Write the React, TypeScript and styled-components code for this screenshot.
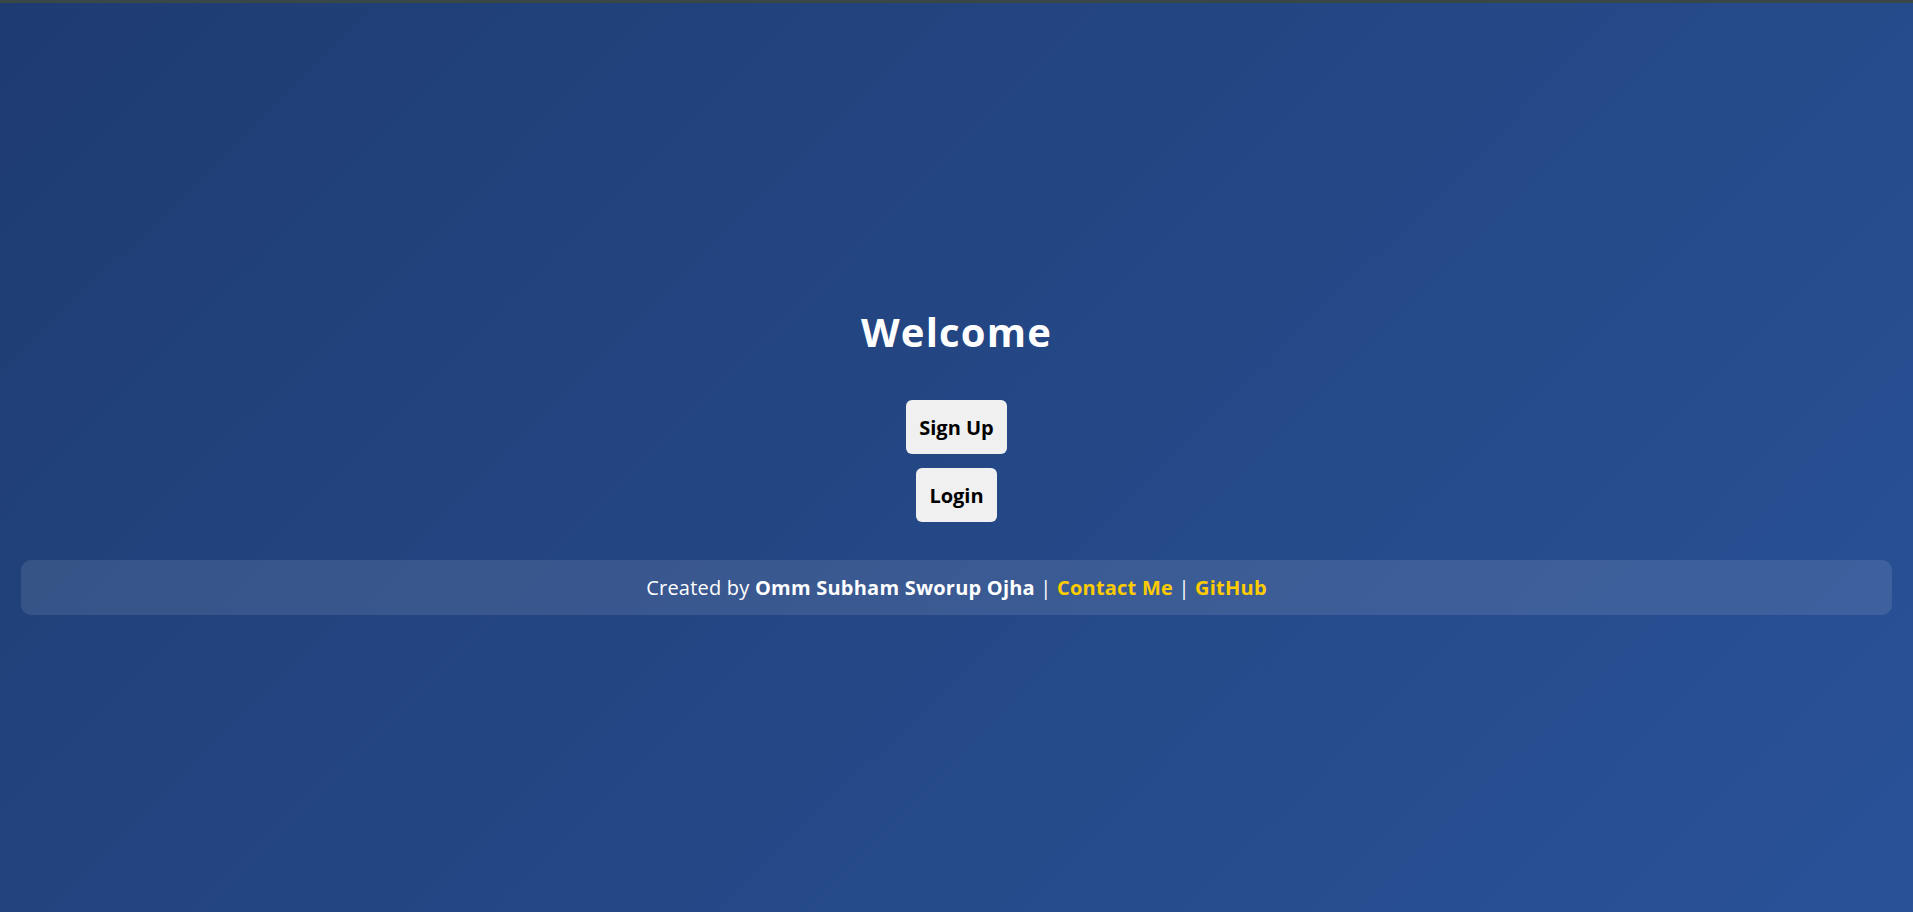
import React from 'react';
import styled, { createGlobalStyle } from 'styled-components';

const GlobalStyle = createGlobalStyle`
  html, body {
    margin: 0;
    padding: 0;
    height: 100%;
  }
  body {
    font-family: "Open Sans", "Liberation Sans", sans-serif;
    background: linear-gradient(135deg, #1e3c72 0%, #2a5298 100%);
    min-height: 100vh;
    color: #fff;
  }
`;

const Page = styled.div`
  box-sizing: border-box;
  min-height: 100vh;
  border-top: 3px solid #3a4747;
  padding: 8px 21px 0;
  display: flex;
  flex-direction: column;
  align-items: center;
  justify-content: center;
`;

const Title = styled.h1`
  margin: 0 0 44px;
  font-size: 40px;
  line-height: 48px;
  font-weight: 700;
  letter-spacing: 1.2px;
  color: #fff;
`;

const ButtonStack = styled.div`
  display: flex;
  flex-direction: column;
  align-items: center;
  gap: 14px;
  margin-bottom: 38px;
`;

const Button = styled.button`
  font-family: inherit;
  font-size: 20px;
  line-height: 30px;
  font-weight: 700;
  color: #000;
  background: #f0f0f0;
  border: none;
  border-radius: 6px;
  padding: 13px 13px 11px;
  cursor: pointer;
`;

const Footer = styled.footer`
  align-self: stretch;
  box-sizing: border-box;
  background: rgba(255, 255, 255, 0.1);
  border-radius: 10px;
  padding: 12.5px 20px;
  text-align: center;
  font-size: 20px;
  line-height: 30px;
  letter-spacing: 0.22px;
  color: #fff;
`;

const Name = styled.strong`
  font-weight: 700;
`;

const Link = styled.a`
  color: #ffcc00;
  font-weight: 700;
  text-decoration: none;
`;

export default function App() {
  return (
    <>
      <GlobalStyle />
      <Page>
        <Title>Welcome</Title>
        <ButtonStack>
          <Button>Sign Up</Button>
          <Button>Login</Button>
        </ButtonStack>
        <Footer>
          Created by <Name>Omm Subham Sworup Ojha</Name> | <Link href="#">Contact Me</Link> |{' '}
          <Link href="#">GitHub</Link>
        </Footer>
      </Page>
    </>
  );
}
